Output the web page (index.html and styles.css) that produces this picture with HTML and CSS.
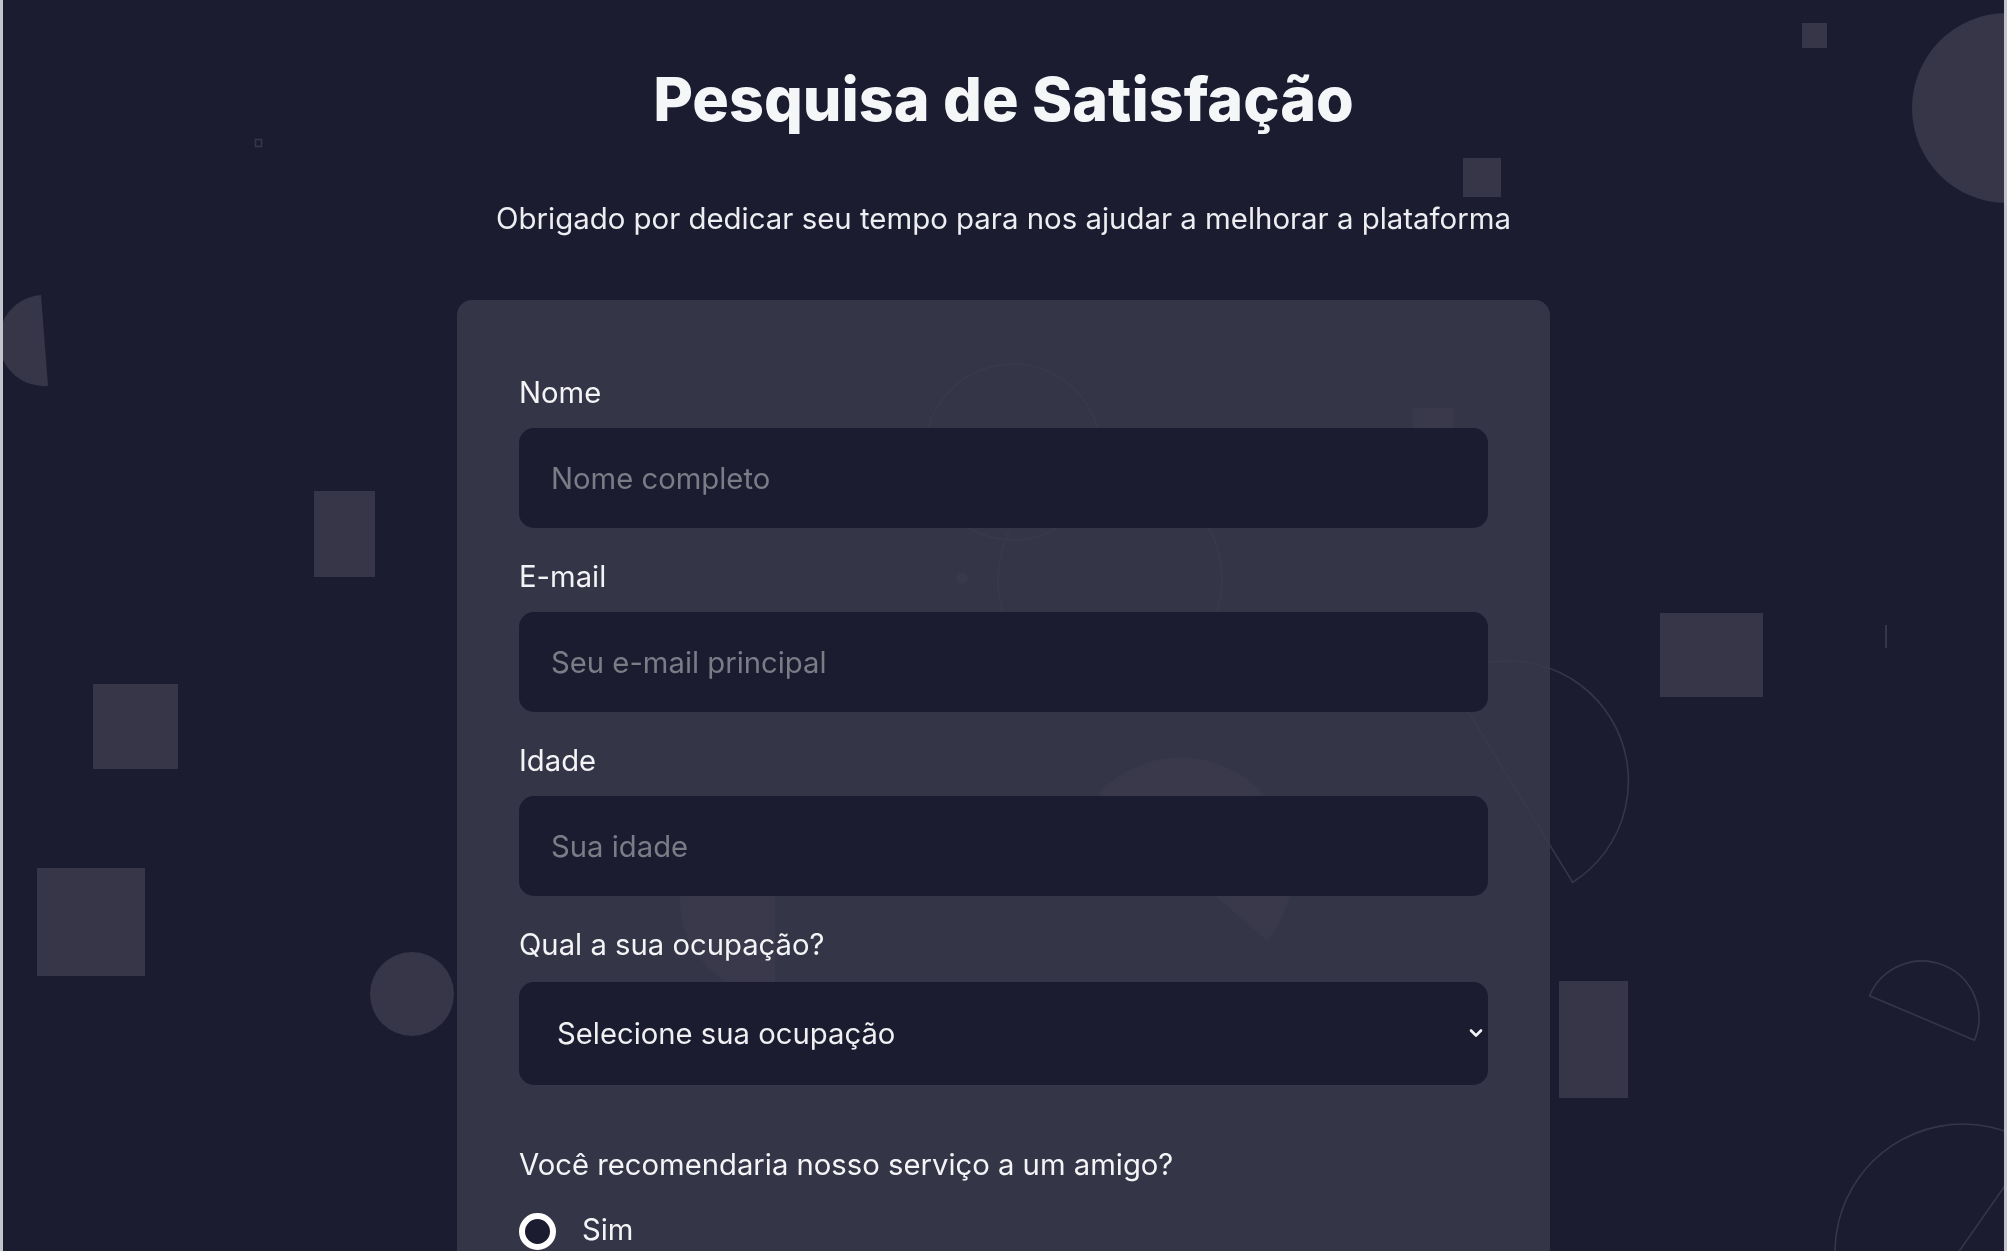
FILE: index.html
```html
<!DOCTYPE html>
<html lang="pt-BR">
<head>
<meta charset="utf-8">
<title>Pesquisa de Satisfação</title>
<link rel="stylesheet" href="styles.css">
</head>
<body>
<div class="bg-shapes" aria-hidden="true">
  <svg class="bg-svg" width="2007" height="1251" viewBox="0 0 2007 1251">
    <g class="shape-fill">
      <path d="M41,295 L48,386 A45.6,45.6 0 0 1 41,295 Z"/>
      <rect x="314" y="491" width="61" height="86"/>
      <rect x="93" y="684" width="85" height="85"/>
      <rect x="37" y="868" width="108" height="108"/>
      <circle cx="412" cy="994" r="42"/>
      <rect x="1802" y="23" width="25" height="25"/>
      <rect x="1463" y="158" width="38" height="39"/>
      <circle cx="2007" cy="108" r="95"/>
      <rect x="1660" y="613" width="103" height="84"/>
      <rect x="1559" y="981" width="69" height="117"/>
      <rect x="1885" y="625" width="2" height="23"/>
      <circle cx="962" cy="578" r="6"/>
      <rect x="1413" y="408" width="40" height="60"/>
      <path d="M1099,793 A112,112 0 0 1 1267,941 Z"/>
      <path d="M775,805 L775,995 A95,95 0 0 1 775,805 Z"/>
    </g>
    <g class="shape-line">
      <rect x="255.5" y="139.5" width="6" height="7"/>
      <path d="M1447.3,677.7 A120,120 0 0 1 1572.7,882.3 Z"/>
      <path d="M1869.5,995.8 A57,57 0 0 1 1974.5,1040.2 Z"/>
      <path d="M2033.4,1145.2 A128,128 0 0 0 1886.6,1354.8 Z"/>
      <circle cx="1013" cy="452" r="88"/>
      <circle cx="1110" cy="580" r="112"/>
    </g>
  </svg>
</div>
<div class="window-edge" aria-hidden="true"></div>

<main class="page">
  <h1 class="title">Pesquisa de Satisfação</h1>
  <p class="subtitle">Obrigado por dedicar seu tempo para nos ajudar a melhorar a plataforma</p>

  <form class="card">
    <div class="field">
      <label class="label" for="nome">Nome</label>
      <input class="input" id="nome" type="text" placeholder="Nome completo">
    </div>
    <div class="field">
      <label class="label" for="email">E-mail</label>
      <input class="input" id="email" type="email" placeholder="Seu e-mail principal">
    </div>
    <div class="field">
      <label class="label" for="idade">Idade</label>
      <input class="input" id="idade" type="number" placeholder="Sua idade">
    </div>
    <div class="field field-select">
      <label class="label" for="ocupacao">Qual a sua ocupação?</label>
      <div class="select-wrap">
        <select class="input select" id="ocupacao">
          <option>Selecione sua ocupação</option>
          <option>Estudante</option>
          <option>Profissional</option>
          <option>Outro</option>
        </select>
        <svg class="chevron" width="14" height="10" viewBox="0 0 14 10" aria-hidden="true">
          <path d="M2 2.5 L7 7.5 L12 2.5" fill="none" stroke="#f4f4f6" stroke-width="2.6" stroke-linecap="round" stroke-linejoin="round"/>
        </svg>
      </div>
    </div>
    <div class="radio-group">
      <p class="label question">Você recomendaria nosso serviço a um amigo?</p>
      <label class="radio"><input class="radio-input" type="radio" name="rec"><span>Sim</span></label>
      <label class="radio"><input class="radio-input" type="radio" name="rec"><span>Não</span></label>
      <label class="radio"><input class="radio-input" type="radio" name="rec"><span>Talvez</span></label>
    </div>
  </form>
</main>
</body>
</html>
```

FILE: styles.css
```css
html {
  overflow: hidden;
}

body {
  margin: 0;
  background: #1b1c30;
  color: #f4f4f6;
  font-family: Inter, "Noto Sans", sans-serif;
}

.bg-shapes {
  position: fixed;
  inset: 0;
  z-index: 0;
}

.bg-svg {
  display: block;
}

.shape-fill {
  fill: #363648;
}

.shape-line {
  fill: none;
  stroke: #363649;
  stroke-width: 1.6;
}

.window-edge {
  position: fixed;
  inset: 0;
  z-index: 5;
  border-left: 3px solid #c4c5cc;
  border-right: 3px solid #c4c5cc;
  pointer-events: none;
}

.page {
  position: relative;
  z-index: 1;
  display: flex;
  flex-direction: column;
  align-items: center;
  padding-top: 62px;
}

.title {
  margin: 0;
  font-size: 61px;
  font-weight: 800;
  line-height: 75px;
  color: #f5f6f8;
}

.subtitle {
  margin: 64px 0 0;
  font-size: 29.4px;
  line-height: 36px;
  color: #eeeef2;
}

.card {
  margin-top: 63px;
  width: 1093px;
  box-sizing: border-box;
  padding: 75px 62px 80px;
  background: rgba(58, 58, 76, 0.85);
  border-radius: 15px;
  display: flex;
  flex-direction: column;
}

.field {
  display: flex;
  flex-direction: column;
  gap: 17px;
  margin-bottom: 31px;
}

.field-select {
  gap: 19px;
  margin-bottom: 62px;
}

.label {
  margin: 0;
  font-size: 29.25px;
  line-height: 36px;
  color: #f4f4f6;
}

.input {
  box-sizing: border-box;
  width: 100%;
  height: 100px;
  border: none;
  border-radius: 15px;
  background: #1b1c30;
  padding: 0 32px;
  font-family: Inter, "Noto Sans", sans-serif;
  font-size: 29.25px;
  color: #f0f0f2;
  outline: none;
}

.input::placeholder {
  color: #7c7c87;
}

.select-wrap {
  position: relative;
}

.select {
  appearance: none;
  -webkit-appearance: none;
  height: 103px;
  padding-left: 38px;
}

.chevron {
  position: absolute;
  right: 5px;
  top: 46px;
  pointer-events: none;
}

.radio-group {
  display: flex;
  flex-direction: column;
  gap: 27px;
}

.radio {
  display: flex;
  align-items: center;
  gap: 26px;
  font-size: 29.25px;
  line-height: 36px;
  color: #f4f4f6;
}

.radio-input {
  appearance: none;
  -webkit-appearance: none;
  margin: 3px 0 0;
  width: 37px;
  height: 37px;
  box-sizing: border-box;
  border: 6px solid #ffffff;
  border-radius: 50%;
  background: #1b1c30;
}
```
